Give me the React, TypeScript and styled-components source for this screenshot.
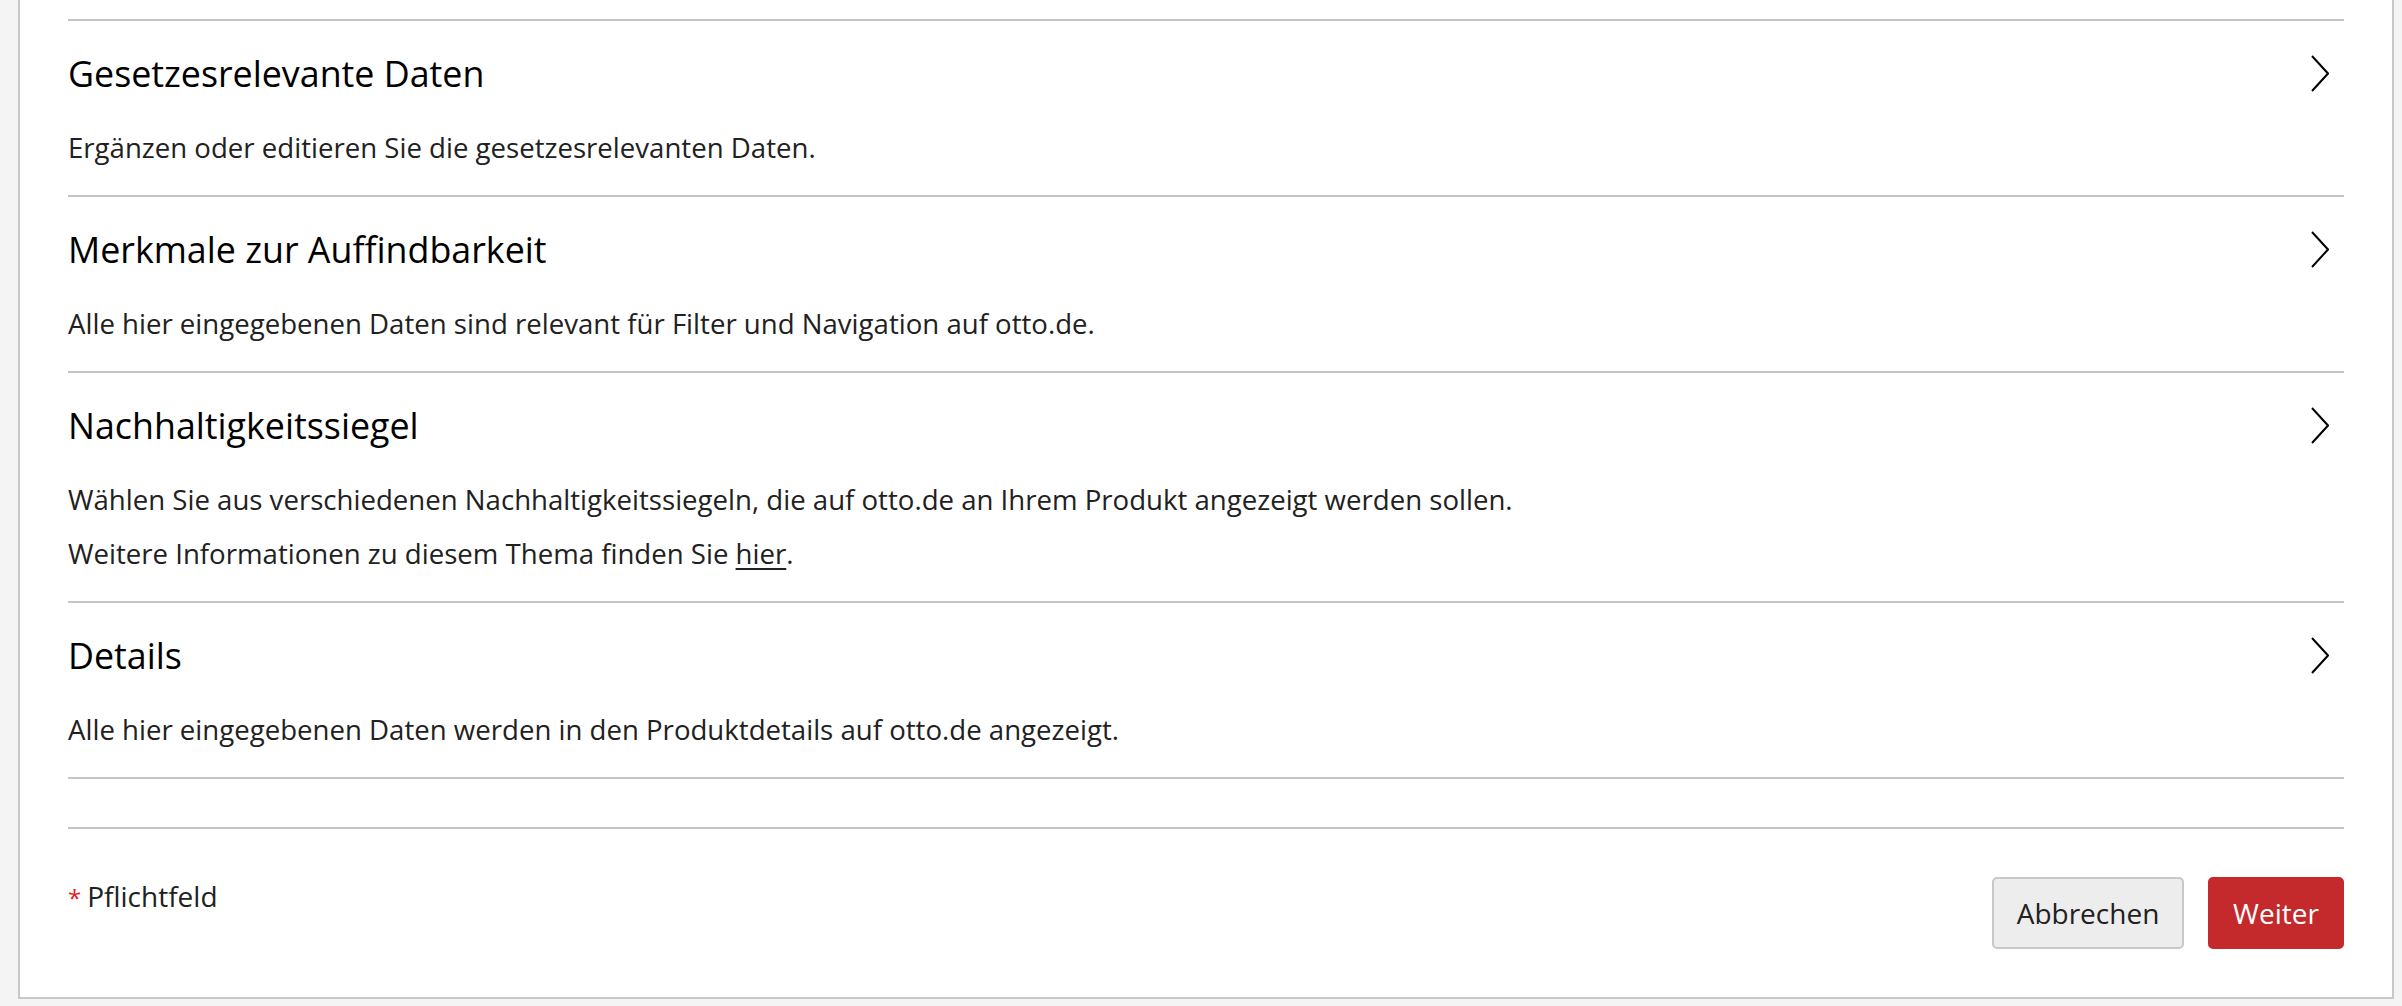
import React from "react";
import styled, { createGlobalStyle } from "styled-components";

const Global = createGlobalStyle`
  html, body { margin: 0; padding: 0; background: #f4f4f4; }
  body { font-family: "Open Sans", Lato, sans-serif; color: #212121; }
`;

const Page = styled.div`
  padding: 0 8px 7px 18px;
`;

const Card = styled.div`
  background: #fff;
  border: 2px solid #c8c8c8;
  border-top: none;
  padding: 19px 48px 48px;
`;

const List = styled.div`
  border-top: 2px solid #c4c4c4;
`;

const Section = styled.section`
  border-bottom: 2px solid #c4c4c4;
  padding: 24px 0 21px;
`;

const Header = styled.div`
  display: flex;
  align-items: center;
  justify-content: space-between;
  height: 56px;
  margin-bottom: 19px;
`;

const Title = styled.h2`
  margin: 0;
  font-size: 35.8px;
  font-weight: 400;
  color: #000;
  line-height: 56px;
`;

const Chevron = styled.svg`
  width: 18px;
  height: 37px;
  margin-right: 15px;
  flex: none;
`;

const Text = styled.p`
  margin: 0;
  font-size: 27.6px;
  line-height: 54px;
  color: #212121;
`;

const Link = styled.a`
  color: inherit;
  text-decoration: underline;
  text-underline-offset: 4px;
`;

const Spacer = styled.div`
  height: 48px;
`;

const Footer = styled.div`
  border-top: 2px solid #c4c4c4;
  padding-top: 48px;
  display: flex;
  justify-content: space-between;
  align-items: flex-start;
`;

const Required = styled.div`
  font-size: 28px;
  line-height: 38px;
  color: #212121;
`;

const Star = styled.span`
  color: #e2231a;
  font-size: 24px;
  margin-right: 6px;
`;

const Buttons = styled.div`
  display: flex;
  gap: 24px;
`;

const Button = styled.button<{ $primary?: boolean }>`
  height: 72px;
  padding: 0 22px;
  font-family: "Open Sans", Lato, sans-serif;
  font-size: 28px;
  border-radius: 5px;
  border: 2px solid ${(p) => (p.$primary ? "#c4292b" : "#c8c8c8")};
  background: ${(p) => (p.$primary ? "#c4292b" : "#ededed")};
  color: ${(p) => (p.$primary ? "#fff" : "#212121")};
  min-width: ${(p) => (p.$primary ? "136px" : "192px")};
`;

const ChevronIcon = () => (
  <Chevron viewBox="0 0 18 37">
    <polyline points="1,1 17,18.5 1,36" fill="none" stroke="#000" strokeWidth="2" />
  </Chevron>
);

const sections: { title: string; texts: React.ReactNode[] }[] = [
  { title: "Gesetzesrelevante Daten", texts: ["Ergänzen oder editieren Sie die gesetzesrelevanten Daten."] },
  {
    title: "Merkmale zur Auffindbarkeit",
    texts: ["Alle hier eingegebenen Daten sind relevant für Filter und Navigation auf otto.de."],
  },
  {
    title: "Nachhaltigkeitssiegel",
    texts: [
      "Wählen Sie aus verschiedenen Nachhaltigkeitssiegeln, die auf otto.de an Ihrem Produkt angezeigt werden sollen.",
      <>
        Weitere Informationen zu diesem Thema finden Sie <Link href="#">hier</Link>.
      </>,
    ],
  },
  { title: "Details", texts: ["Alle hier eingegebenen Daten werden in den Produktdetails auf otto.de angezeigt."] },
];

export default function App() {
  return (
    <>
      <Global />
      <Page>
        <Card>
          <List>
            {sections.map((s) => (
              <Section key={s.title}>
                <Header>
                  <Title>{s.title}</Title>
                  <ChevronIcon />
                </Header>
                {s.texts.map((t, i) => (
                  <Text key={i}>{t}</Text>
                ))}
              </Section>
            ))}
          </List>
          <Spacer />
          <Footer>
            <Required>
              <Star>*</Star>Pflichtfeld
            </Required>
            <Buttons>
              <Button>Abbrechen</Button>
              <Button $primary>Weiter</Button>
            </Buttons>
          </Footer>
        </Card>
      </Page>
    </>
  );
}
